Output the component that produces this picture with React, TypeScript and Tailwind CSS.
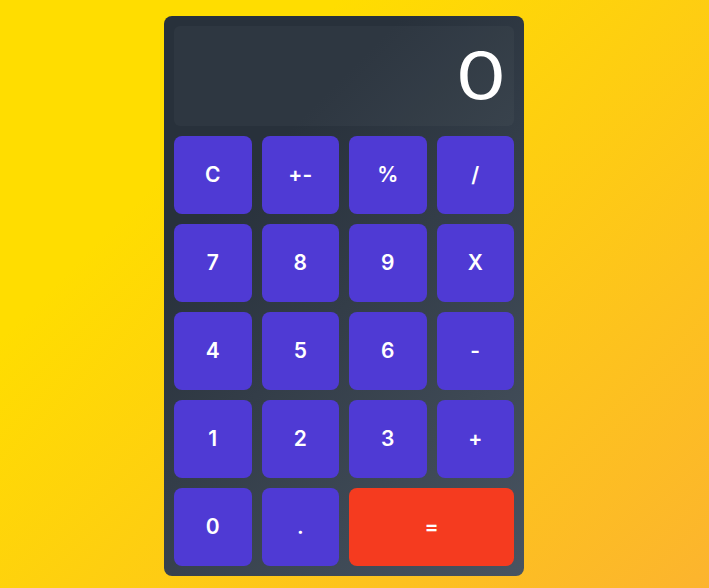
const KEYS: { label: string; wide?: boolean; accent?: boolean }[] = [
  { label: "C" },
  { label: "+-" },
  { label: "%" },
  { label: "/" },
  { label: "7" },
  { label: "8" },
  { label: "9" },
  { label: "X" },
  { label: "4" },
  { label: "5" },
  { label: "6" },
  { label: "-" },
  { label: "1" },
  { label: "2" },
  { label: "3" },
  { label: "+" },
  { label: "0" },
  { label: "." },
  { label: "=", wide: true, accent: true },
]

export default function App() {
  return (
    <div
      className="flex h-[588px] w-full items-start justify-center bg-[linear-gradient(135deg,#ffdd00_26%,#fcb42e_100%)] pt-4 pr-[21px]"
      style={{ fontFamily: '"Inter", "Noto Sans", sans-serif' }}
    >
      <div className="flex w-[360px] flex-col gap-[10px] rounded-lg bg-[linear-gradient(135deg,#28313b_26%,#485461_100%)] p-[10px]">
        {/* Display */}
        <div className="flex h-[100px] items-center justify-end rounded-md bg-white/[0.03] pr-[8px]">
          <span className="origin-right scale-x-[1.26] text-[64px] leading-none font-normal text-white">0</span>
        </div>

        {/* Keypad */}
        <div className="grid grid-cols-4 gap-[10px]">
          {KEYS.map((k) => (
            <button
              key={k.label}
              className={`flex h-[78px] items-center justify-center rounded-lg text-[21px] font-semibold text-white ${
                k.wide ? "col-span-2" : ""
              } ${k.accent ? "bg-[#f53b1f]" : "bg-[#4f3ad4]"}`}
            >
              {k.label}
            </button>
          ))}
        </div>
      </div>
    </div>
  )
}
